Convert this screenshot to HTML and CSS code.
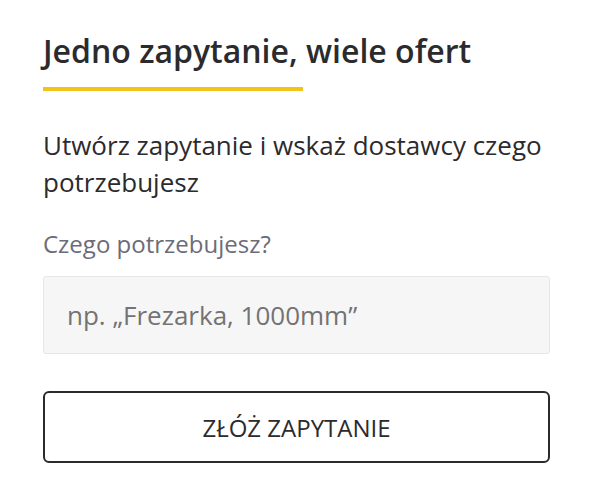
FILE: index.html
```html
<!DOCTYPE html>
<html lang="pl">
<head>
<meta charset="utf-8">
<link rel="stylesheet" href="styles.css">
</head>
<body>
<div class="card">
  <h2 class="title">Jedno zapytanie, wiele ofert</h2>
  <div class="underline"></div>
  <p class="lead">Utwórz zapytanie i wskaż dostawcy czego potrzebujesz</p>
  <label class="label" for="q">Czego potrzebujesz?</label>
  <input class="input" id="q" type="text" placeholder="np. „Frezarka, 1000mm”">
  <button class="btn" type="button">ZŁÓŻ ZAPYTANIE</button>
</div>
</body>
</html>
```
FILE: styles.css
```css
html, body {
  margin: 0;
  padding: 0;
  background: #ffffff;
}
body {
  font-family: "Open Sans", "Noto Sans", sans-serif;
  color: #2b2b2e;
}
.card {
  width: 507px;
  padding: 31px 0 0 43px;
  display: flex;
  flex-direction: column;
}
.title {
  margin: 0;
  font-size: 32px;
  font-weight: 600;
  line-height: 40px;
  color: #2b2b2e;
}
.underline {
  width: 260px;
  height: 4px;
  background: #f2c419;
  margin-top: 16px;
}
.lead {
  margin: 36px 0 0;
  font-size: 26px;
  line-height: 37px;
  color: #2b2b2e;
}
.label {
  margin-top: 28px;
  font-size: 24px;
  line-height: 30px;
  color: #6c6c78;
}
.input {
  margin-top: 17px;
  box-sizing: border-box;
  height: 78px;
  width: 100%;
  padding: 0 23px;
  background: #f6f6f7;
  border: 1px solid #e6e6ea;
  border-radius: 3px;
  font-family: inherit;
  font-size: 26px;
  color: #2b2b2e;
  outline: none;
}
.input::placeholder {
  color: #737373;
  opacity: 1;
}
.btn {
  margin-top: 37px;
  box-sizing: border-box;
  height: 72px;
  width: 100%;
  background: #ffffff;
  border: 2px solid #2b2b2e;
  border-radius: 6px;
  font-family: inherit;
  font-size: 24px;
  color: #2b2b2e;
  cursor: pointer;
}
```
